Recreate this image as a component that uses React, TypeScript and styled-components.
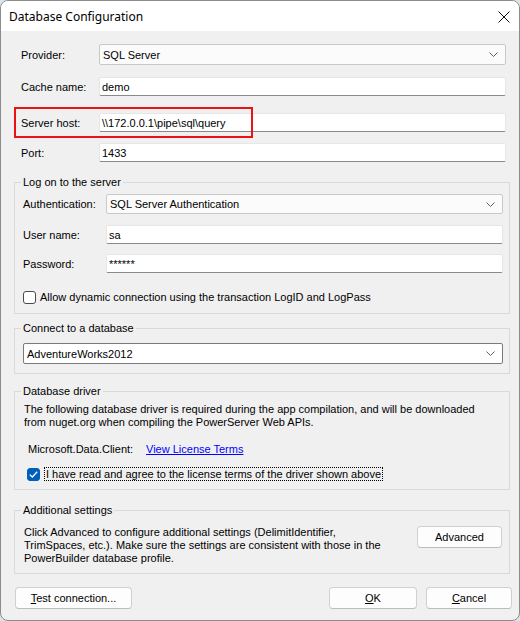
import React from 'react';
import styled, { createGlobalStyle } from 'styled-components';

const Global = createGlobalStyle`
  html, body { margin: 0; padding: 0; background: #dde3ea; }
  body { font-family: "Liberation Sans", Arial, sans-serif; font-size: 11px; color: #000; }
  * { box-sizing: border-box; }
`;

const Window = styled.div`
  position: relative;
  width: 520px;
  height: 621px;
  border: 1px solid #8c8c8c;
  border-radius: 8px;
  background: #f0f0f0;
  overflow: hidden;
  display: flex;
  flex-direction: column;
`;

const TitleBar = styled.div`
  height: 30px;
  background: #ffffff;
  display: flex;
  align-items: center;
  justify-content: space-between;
  padding: 0 9px 0 8px;
  font-family: "Noto Sans", "Open Sans", sans-serif;
  font-size: 12px;
`;

const CloseIcon = styled.svg`
  width: 12px;
  height: 12px;
  margin-top: 1px;
`;

const Body = styled.div`
  display: flex;
  flex-direction: column;
  padding: 0 9px 0 13px;
`;

const Row = styled.div<{ $mt: number; $h: number; $indent?: number; $right?: number }>`
  display: flex;
  align-items: center;
  height: ${(p) => p.$h}px;
  margin-top: ${(p) => p.$mt}px;
  margin-left: ${(p) => p.$indent ?? 0}px;
  margin-right: ${(p) => p.$right ?? 0}px;
`;

const Label = styled.div<{ $w: number }>`
  width: ${(p) => p.$w}px;
  flex-shrink: 0;
  white-space: nowrap;
`;

const TextBox = styled.div`
  flex: 1;
  height: 100%;
  background: #ffffff;
  border: 1px solid #e6e6e6;
  border-bottom: 1px solid #8a8a8a;
  border-radius: 2px;
  display: flex;
  align-items: center;
  padding-left: 2px;
  white-space: nowrap;
`;

const Combo = styled.div<{ $classic?: boolean }>`
  flex: 1;
  height: 100%;
  background: ${(p) => (p.$classic ? '#ffffff' : '#fbfbfb')};
  border: 1px solid ${(p) => (p.$classic ? '#7a7a7a' : '#c8c8c8')};
  border-radius: 2px;
  display: flex;
  align-items: center;
  justify-content: space-between;
  padding: 0 7px 0 3px;
  white-space: nowrap;
`;

const Chevron = () => (
  <svg width="9" height="5" viewBox="0 0 9 5">
    <path d="M0.5 0.5 L4.5 4.5 L8.5 0.5" fill="none" stroke="#5f5f5f" strokeWidth="1" />
  </svg>
);

const Group = styled.fieldset<{ $mt: number }>`
  margin: ${(p) => p.$mt}px 0 0 0;
  padding: 0;
  border: 1px solid #d9d9d9;
  min-width: 0;
`;

const Legend = styled.legend`
  margin-left: 6px;
  padding: 0 2px;
  line-height: 13px;
  height: 13px;
`;

const GroupBody = styled.div<{ $pad: string }>`
  display: flex;
  flex-direction: column;
  padding: ${(p) => p.$pad};
`;

const Para = styled.div<{ $indent?: number }>`
  line-height: 13px;
  padding-left: ${(p) => p.$indent ?? 0}px;
  white-space: nowrap;
`;

const CheckRow = styled.div<{ $mt: number; $indent: number }>`
  display: flex;
  align-items: center;
  margin-top: ${(p) => p.$mt}px;
  margin-left: ${(p) => p.$indent}px;
  height: 16px;
  gap: 4px;
`;

const Box = styled.div<{ $checked?: boolean }>`
  width: 13px;
  height: 13px;
  border-radius: 3px;
  border: 1px solid ${(p) => (p.$checked ? '#005fb8' : '#4a4a4a')};
  background: ${(p) => (p.$checked ? '#005fb8' : '#ffffff')};
  display: flex;
  align-items: center;
  justify-content: center;
  flex-shrink: 0;
`;

const FocusText = styled.span`
  border: 1px dotted #000;
  padding: 0 1px;
  line-height: 12px;
`;

const Link = styled.span`
  color: #0000ff;
  text-decoration: underline;
`;

const Button = styled.button<{ $w: number }>`
  width: ${(p) => p.$w}px;
  height: 22px;
  background: #fdfdfd;
  border: 1px solid #d0d0d0;
  border-bottom-color: #bdbdbd;
  border-radius: 4px;
  font-family: "Liberation Sans", Arial, sans-serif;
  font-size: 11px;
  color: #000;
  padding: 0;
  flex-shrink: 0;
`;

const SettingsRow = styled.div`
  display: flex;
  align-items: flex-start;
  justify-content: space-between;
`;

const ButtonBar = styled.div`
  display: flex;
  align-items: center;
  margin: 13px -2px 0 1px;
`;

const Spacer = styled.div`
  flex: 1;
`;

const ButtonGap = styled.div`
  width: 9px;
`;

const Highlight = styled.div`
  position: absolute;
  left: 13px;
  top: 106px;
  width: 239px;
  height: 31px;
  border: 2px solid #ee1111;
  pointer-events: none;
`;

export default function App() {
  return (
    <>
      <Global />
      <Window>
        <TitleBar>
          <span>Database Configuration</span>
          <CloseIcon viewBox="0 0 12 12">
            <path d="M0.5 0.5 L11.5 11.5 M11.5 0.5 L0.5 11.5" stroke="#111" strokeWidth="1" />
          </CloseIcon>
        </TitleBar>
        <Body>
          <Row $mt={13} $h={21} $indent={7} $right={4}>
            <Label $w={78}>Provider:</Label>
            <Combo>
              <span>SQL Server</span>
              <Chevron />
            </Combo>
          </Row>
          <Row $mt={12} $h={19} $indent={7} $right={4}>
            <Label $w={78}>Cache name:</Label>
            <TextBox>demo</TextBox>
          </Row>
          <Row $mt={17} $h={19} $indent={7} $right={4}>
            <Label $w={78}>Server host:</Label>
            <TextBox>\\172.0.0.1\pipe\sql\query</TextBox>
          </Row>
          <Row $mt={11} $h={19} $indent={7} $right={4}>
            <Label $w={78}>Port:</Label>
            <TextBox>1433</TextBox>
          </Row>

          <Group $mt={14}>
            <Legend>Log on to the server</Legend>
            <GroupBody $pad="5px 6px 8px 8px">
              <Row $mt={0} $h={20}>
                <Label $w={83}>Authentication:</Label>
                <Combo>
                  <span>SQL Server Authentication</span>
                  <Chevron />
                </Combo>
              </Row>
              <Row $mt={11} $h={19}>
                <Label $w={83}>User name:</Label>
                <TextBox>sa</TextBox>
              </Row>
              <Row $mt={10} $h={19}>
                <Label $w={83}>Password:</Label>
                <TextBox>******</TextBox>
              </Row>
              <CheckRow $mt={16} $indent={0}>
                <Box />
                <span>Allow dynamic connection using the transaction LogID and LogPass</span>
              </CheckRow>
            </GroupBody>
          </Group>

          <Group $mt={8}>
            <Legend>Connect to a database</Legend>
            <GroupBody $pad="8px 6px 9px 8px">
              <Row $mt={0} $h={21}>
                <Combo $classic>
                  <span>AdventureWorks2012</span>
                  <Chevron />
                </Combo>
              </Row>
            </GroupBody>
          </Group>

          <Group $mt={11}>
            <Legend>Database driver</Legend>
            <GroupBody $pad="5px 6px 7px 9px">
              <Para>
                The following database driver is required during the app compilation, and will be downloaded
                <br />
                from nuget.org when compiling the PowerServer Web APIs.
              </Para>
              <Row $mt={13} $h={13} $indent={4}>
                <Label $w={118}>Microsoft.Data.Client:</Label>
                <Link>View License Terms</Link>
              </Row>
              <CheckRow $mt={11} $indent={3}>
                <Box $checked>
                  <svg width="9" height="7" viewBox="0 0 9 7">
                    <path d="M0.8 3.6 L3.3 6 L8.2 0.8" fill="none" stroke="#fff" strokeWidth="1.3" />
                  </svg>
                </Box>
                <FocusText>I have read and agree to the license terms of the driver shown above</FocusText>
              </CheckRow>
            </GroupBody>
          </Group>

          <Group $mt={14}>
            <Legend>Additional settings</Legend>
            <GroupBody $pad="9px 7px 8px 9px">
              <SettingsRow>
                <Para>
                  Click Advanced to configure additional settings (DelimitIdentifier,
                  <br />
                  TrimSpaces, etc.). Make sure the settings are consistent with those in the
                  <br />
                  PowerBuilder database profile.
                </Para>
                <Button $w={85}>Advanced</Button>
              </SettingsRow>
            </GroupBody>
          </Group>

          <ButtonBar>
            <Button $w={117}>
              <u>T</u>est connection...
            </Button>
            <Spacer />
            <Button $w={88}>
              <u>O</u>K
            </Button>
            <ButtonGap />
            <Button $w={86}>
              <u>C</u>ancel
            </Button>
          </ButtonBar>
        </Body>
        <Highlight />
      </Window>
    </>
  );
}
